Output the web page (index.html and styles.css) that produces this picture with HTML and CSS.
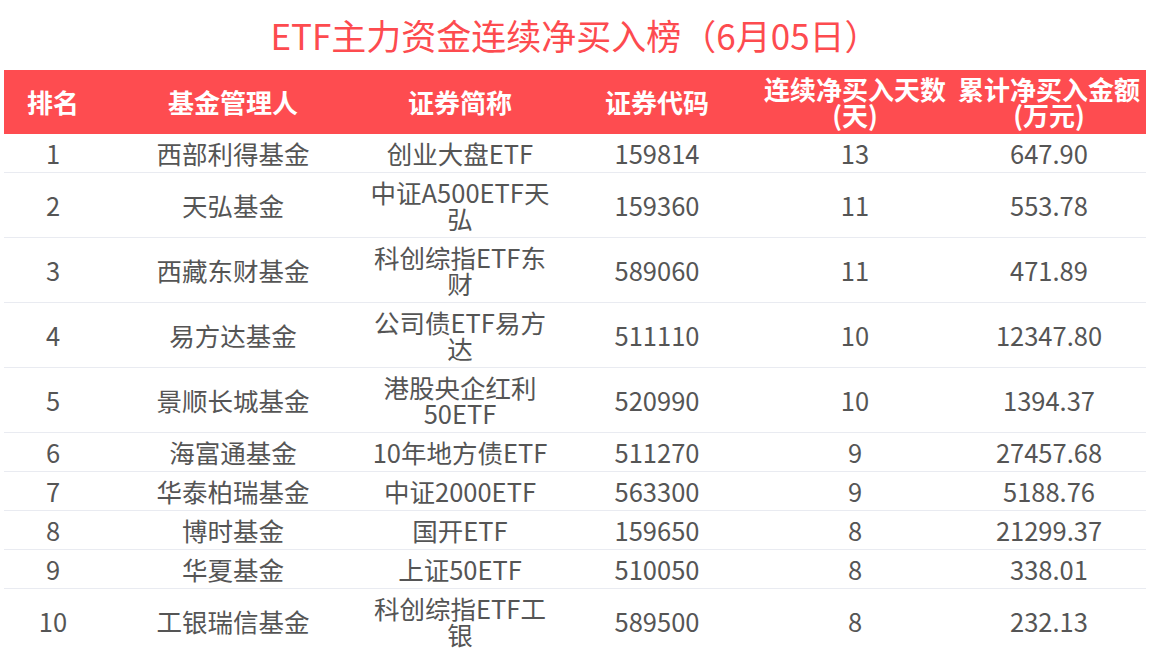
FILE: index.html
```html
<!DOCTYPE html>
<html lang="zh-CN">
<head>
<meta charset="utf-8">
<title>ETF主力资金连续净买入榜</title>
<link rel="stylesheet" href="styles.css">
</head>
<body>
<div class="page">
  <h1 class="title">ETF主力资金连续净买入榜（6月05日）</h1>
  <table class="rank">
    <colgroup>
      <col class="c1"><col class="c2"><col class="c3"><col class="c4"><col class="c5"><col class="c6">
    </colgroup>
    <thead>
      <tr>
        <th>排名</th>
        <th>基金管理人</th>
        <th>证券简称</th>
        <th>证券代码</th>
        <th>连续净买入天数(天)</th>
        <th>累计净买入金额(万元)</th>
      </tr>
    </thead>
    <tbody>
      <tr><td>1</td><td>西部利得基金</td><td>创业大盘ETF</td><td>159814</td><td>13</td><td>647.90</td></tr>
      <tr><td>2</td><td>天弘基金</td><td>中证A500ETF天弘</td><td>159360</td><td>11</td><td>553.78</td></tr>
      <tr><td>3</td><td>西藏东财基金</td><td>科创综指ETF东财</td><td>589060</td><td>11</td><td>471.89</td></tr>
      <tr><td>4</td><td>易方达基金</td><td>公司债ETF易方达</td><td>511110</td><td>10</td><td>12347.80</td></tr>
      <tr><td>5</td><td>景顺长城基金</td><td>港股央企红利50ETF</td><td>520990</td><td>10</td><td>1394.37</td></tr>
      <tr><td>6</td><td>海富通基金</td><td>10年地方债ETF</td><td>511270</td><td>9</td><td>27457.68</td></tr>
      <tr><td>7</td><td>华泰柏瑞基金</td><td>中证2000ETF</td><td>563300</td><td>9</td><td>5188.76</td></tr>
      <tr><td>8</td><td>博时基金</td><td>国开ETF</td><td>159650</td><td>8</td><td>21299.37</td></tr>
      <tr><td>9</td><td>华夏基金</td><td>上证50ETF</td><td>510050</td><td>8</td><td>338.01</td></tr>
      <tr><td>10</td><td>工银瑞信基金</td><td>科创综指ETF工银</td><td>589500</td><td>8</td><td>232.13</td></tr>
    </tbody>
  </table>
</div>
</body>
</html>
```
FILE: styles.css
```css
html, body {
  margin: 0;
  padding: 0;
  background: #ffffff;
}
body {
  font-family: "Noto Sans CJK SC", "Noto Sans", sans-serif;
  color: #555555;
}
.page {
  padding: 0 4px;
}
.title {
  margin: 0;
  height: 70px;
  line-height: 70px;
  font-size: 35px;
  font-weight: 400;
  color: #fd4b4f;
  text-align: center;
}
.rank {
  width: 1142px;
  border-collapse: collapse;
  table-layout: fixed;
}
.c1 { width: 98px; }
.c2 { width: 262px; }
.c3 { width: 192px; }
.c4 { width: 202px; }
.c5 { width: 194px; }
.c6 { width: 194px; }
.rank th {
  background: #fe4c50;
  color: #ffffff;
  font-size: 26px;
  font-weight: 700;
  line-height: 26px;
  height: 64px;
  padding: 6px 2px;
  box-sizing: border-box;
  text-align: center;
  vertical-align: middle;
}
.rank td {
  font-size: 25.5px;
  line-height: 26px;
  padding: 6px 6px;
  text-align: center;
  vertical-align: middle;
  border-bottom: 1px solid #e9ebf1;
}
.rank tbody tr:last-child td {
  border-bottom: none;
}
```
